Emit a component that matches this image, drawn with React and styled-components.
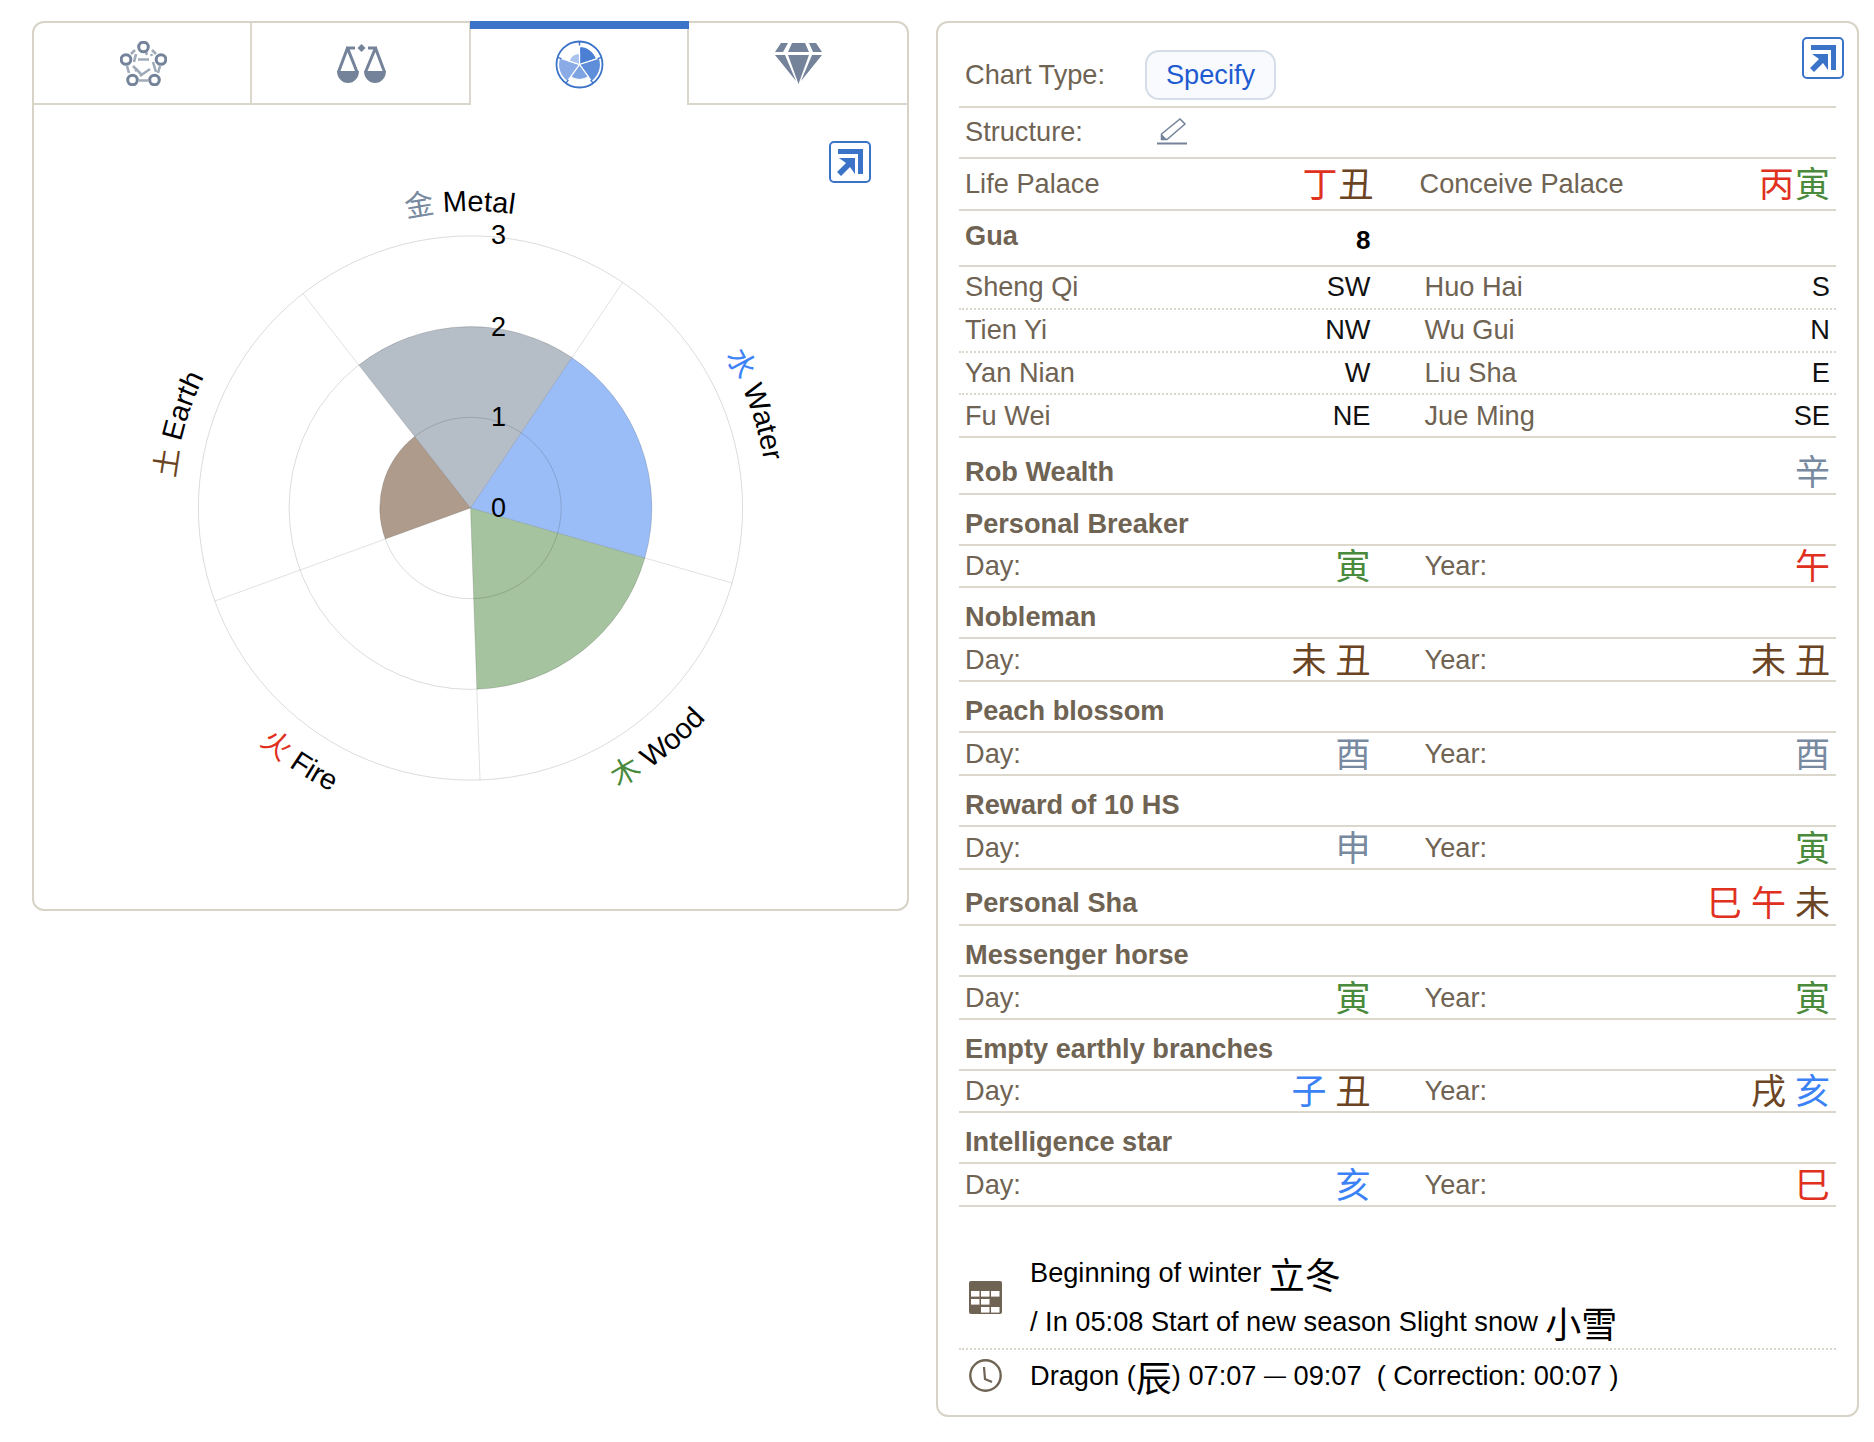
import React from 'react';
import styled, { createGlobalStyle } from 'styled-components';

const SANS = `"Liberation Sans", "Noto Sans CJK SC", Arial, sans-serif`;
const HAN = `"Noto Sans CJK SC", "Liberation Sans", sans-serif`;

const LINE = '#dcd7cc';
const BLUE = '#3b73c9';
const SLATE = '#74839a';
const BROWN = '#6f6353';

const ELEMENT = {
  metal: '#788a9f',
  water: '#3a82f6',
  wood: '#4a8a3c',
  fire: '#e0301e',
  earth: '#6b4423',
};

const CX = 436.5;
const CY = 403;
const UNIT = 90.7;

function polar(cx, cy, r, deg) {
  const a = ((deg - 90) * Math.PI) / 180;
  return [cx + r * Math.cos(a), cy + r * Math.sin(a)];
}

function sector(cx, cy, r, from, to) {
  const [x1, y1] = polar(cx, cy, r, from);
  const [x2, y2] = polar(cx, cy, r, to);
  return `M${cx} ${cy}L${x1} ${y1}A${r} ${r} 0 0 1 ${x2} ${y2}Z`;
}

function labelArc(r, mid, flip) {
  const [x1, y1] = polar(CX, CY, r, flip ? mid + 70 : mid - 70);
  const [x2, y2] = polar(CX, CY, r, flip ? mid - 70 : mid + 70);
  return `M${x1} ${y1}A${r} ${r} 0 0 ${flip ? 0 : 1} ${x2} ${y2}`;
}

const SECTORS = [
  { id: 'metal', han: '金', name: 'Metal', value: 2, from: -38, flip: false, fill: '#788799' },
  { id: 'water', han: '水', name: 'Water', value: 2, from: 34, flip: false, fill: '#4987f1' },
  { id: 'wood', han: '木', name: 'Wood', value: 2, from: 106, flip: true, fill: '#5b924f' },
  { id: 'fire', han: '火', name: 'Fire', value: 0, from: 178, flip: true, fill: '#e0301e' },
  { id: 'earth', han: '土', name: 'Earth', value: 1, from: 250, flip: false, fill: '#6c482c' },
];

const Global = createGlobalStyle`
  html, body { margin: 0; padding: 0; background: #fff; }
  body { font-family: ${SANS}; }
  * { box-sizing: border-box; }
`;

const Page = styled.div`
  display: flex;
  align-items: flex-start;
  gap: 27px;
  width: 1874px;
  height: 1442px;
  padding: 21px 0 0 32px;
`;

const Panel = styled.section`
  position: relative;
  flex: none;
  width: ${(p) => p.$w}px;
  height: ${(p) => p.$h}px;
  border: 2px solid #d8d3c7;
  border-radius: 12px;
`;

const Tabs = styled.div`
  display: grid;
  grid-template-columns: repeat(4, 1fr);
  height: 82px;
`;

const Tab = styled.div`
  position: relative;
  display: flex;
  align-items: center;
  justify-content: center;
  padding: ${(p) => (p.$active ? 1 : 0)}px 0 0 2px;
  border-right: ${(p) => (p.$last ? 'none' : `2px solid ${LINE}`)};
  border-bottom: ${(p) => (p.$active ? 'none' : `2px solid ${LINE}`)};

  ${(p) =>
    p.$active &&
    `&::before {
      content: '';
      position: absolute;
      left: -1px;
      right: -2px;
      top: -2px;
      height: 8px;
      background: ${BLUE};
    }`}
`;

const ExpandBox = styled.button`
  position: absolute;
  top: ${(p) => p.$top}px;
  right: ${(p) => p.$right}px;
  width: 42px;
  height: 42px;
  padding: 0;
  background: #fff;
  border: 2px solid ${BLUE};
  border-radius: 5px;
  display: flex;
`;

const Chart = styled.svg`
  display: block;
  width: 873px;
  height: 805px;
`;

const ChartLabel = styled.text`
  font-family: ${SANS};
  font-size: 29px;
  fill: #000;
`;

const AxisNumber = styled.text`
  font-family: ${SANS};
  font-size: 27px;
  fill: #000;
  text-anchor: middle;
  dominant-baseline: central;
`;

const Sheet = styled.div`
  padding: 0 21px;
`;

const Row = styled.div`
  display: ${(p) => (p.$grid ? 'grid' : 'flex')};
  grid-template-columns: 1fr 1fr;
  column-gap: 54px;
  align-items: ${(p) => p.$align || 'center'};
  justify-content: space-between;
  height: ${(p) => p.$h}px;
  padding: ${(p) => p.$pad || '0 6px'};
  border-bottom: 2px ${(p) => (p.$dotted ? 'dotted' : 'solid')} ${LINE};
`;

const Cell = styled.div`
  display: flex;
  align-items: center;
  justify-content: space-between;
  margin-left: ${(p) => p.$shift || 0}px;
`;

const Label = styled.span`
  font-size: 27.2px;
  line-height: 32px;
  color: ${BROWN};
  font-weight: ${(p) => (p.$bold ? 700 : 400)};
`;

const Fixed = styled(Label)`
  display: inline-block;
  width: 180px;
`;

const Inline = styled.div`
  display: flex;
  align-items: center;
`;

const Value = styled.span`
  font-size: 27.2px;
  line-height: 32px;
  color: #111;
`;

const Gua = styled.span`
  font-size: 26px;
  font-weight: 700;
  line-height: 32px;
  color: #000;
  padding-top: 8px;
`;

const Branches = styled.span`
  display: flex;
  gap: ${(p) => (p.$tight ? 1 : 9)}px;
  margin-top: -4px;
  margin-right: ${(p) => p.$out || 0}px;
`;

const Han = styled.span`
  font-family: ${HAN};
  font-size: ${(p) => p.$size || 35}px;
  line-height: 38px;
  color: ${(p) => ELEMENT[p.$el]};
`;

const Pill = styled.button`
  width: 131px;
  height: 50px;
  padding: 0;
  font-family: ${SANS};
  font-size: 27.2px;
  color: #1f5bd0;
  background: #f8fafd;
  border: 2px solid #d5dde8;
  border-radius: 14px;
`;

const PencilSlot = styled.span`
  display: flex;
  margin-left: 12px;
`;

const Season = styled.div`
  display: flex;
  align-items: center;
  height: 143px;
  padding: 39px 0 0 10px;
  border-bottom: 2px dotted ${LINE};
`;

const Hour = styled.div`
  display: flex;
  align-items: center;
  height: 60px;
  padding: 0 0 9px 10px;
`;

const IconSlot = styled.div`
  flex: none;
  display: flex;
  width: 61px;
`;

const Lines = styled.div`
  display: flex;
  flex-direction: column;
  font-size: 27.2px;
  color: #000;
`;

const TextLine = styled.div`
  height: 49px;
  display: flex;
  align-items: center;
  white-space: pre;
`;

const BigHan = styled.span`
  font-family: ${HAN};
  font-size: 36px;
  line-height: 40px;
  color: #000;
`;

const Dash = styled.span`
  font-size: 22px;
`;

function ExpandIcon({ top, right }) {
  return (
    <ExpandBox $top={top} $right={right} aria-label="expand">
      <svg width="38" height="38" viewBox="0 0 38 38">
        <path d="M7 6H32V31H27V11H7Z" fill={BLUE} />
        <path d="M8 15H24V31L19 24L10 33L6 29L15 20Z" fill={BLUE} />
      </svg>
    </ExpandBox>
  );
}

function NetworkIcon() {
  const nodes = [
    [23.5, 6],
    [6, 18.5],
    [41, 18.5],
    [12.5, 39],
    [34.5, 39],
  ];
  return (
    <svg width="47" height="45" viewBox="0 0 47 45">
      <g stroke="#a0abba" strokeWidth="2.6" fill="none">
        <path d="M15 9L11 13M32 9L36 13M7 25L9 32M40 25L38 32M19 39.5H28" />
        <path d="M16 13L14 21M18 18.5H29M26 11L27 14M13 25L21 33M33 21L36 31M20 35L30 28M15 30L18 28M31 13L32 15" />
      </g>
      {nodes.map(([x, y]) => (
        <circle key={`${x}-${y}`} cx={x} cy={y} r="4.8" fill="#fff" stroke={SLATE} strokeWidth="3" />
      ))}
    </svg>
  );
}

function ScalesIcon() {
  return (
    <svg width="49" height="41" viewBox="0 0 49 41">
      <path d="M24.5 1L28.5 5L24.5 9L20.5 5Z" fill={SLATE} />
      <path d="M9 5H18M31 5H40M10.5 5L1.5 29M10.5 5L20 29M38.5 5L28.5 29M38.5 5L47.5 29" stroke={SLATE} strokeWidth="3" fill="none" />
      <path d="M0 28H22A11 12 0 0 1 0 28ZM27 28H49A11 12 0 0 1 27 28Z" fill={SLATE} />
    </svg>
  );
}

function RadarIcon() {
  const c = 24.5;
  const wedges = [
    [0, 72, 18, '#4a7fd4'],
    [72, 144, 21, '#5e8dd9'],
    [144, 216, 15, '#7ea3e2'],
    [216, 288, 21, '#8aabe5'],
    [288, 360, 11, '#a9c3ee'],
  ];
  const ticks = [0, 72, 144, 216, 288];
  return (
    <svg width="49" height="49" viewBox="0 0 49 49">
      {wedges.map(([a, b, r, fill]) => (
        <path key={a} d={sector(c, c, r, a, b)} fill={fill} stroke="#fff" strokeWidth="1.2" />
      ))}
      <circle cx={c} cy={c} r="23" fill="none" stroke={BLUE} strokeWidth="1.8" />
      {ticks.map((t) => {
        const [x1, y1] = polar(c, c, 19, t);
        const [x2, y2] = polar(c, c, 23, t);
        return <line key={t} x1={x1} y1={y1} x2={x2} y2={y2} stroke={BLUE} strokeWidth="1.4" />;
      })}
    </svg>
  );
}

function DiamondIcon() {
  return (
    <svg width="47" height="41" viewBox="0 0 47 41">
      <path
        d="M6 0H13L8 9H0ZM17 0H30L34 9H13ZM34 0H41L47 9H38ZM0 12H10L21 38ZM13 12H34L23.5 41ZM37 12H47L26 38Z"
        fill={SLATE}
      />
    </svg>
  );
}

function PencilIcon() {
  return (
    <svg width="30" height="27" viewBox="0 0 30 27">
      <path d="M4.5 16L23 1L28 6L10 21.5H4.5Z" fill="none" stroke={SLATE} strokeWidth="1.5" />
      <path d="M4.5 16L10 21.5H4.5Z" fill={SLATE} />
      <path d="M0 25.5H30" stroke={SLATE} strokeWidth="2" />
    </svg>
  );
}

function CalendarIcon() {
  const cells = [
    [2, 10],
    [12, 10],
    [22, 10],
    [2, 18],
    [12, 18],
    [12, 26],
    [22, 26],
  ];
  return (
    <svg width="33" height="33" viewBox="0 0 33 33">
      <rect width="33" height="33" rx="2" fill={BROWN} />
      {cells.map(([x, y]) => (
        <rect key={`${x}-${y}`} x={x} y={y} width="8.5" height="5.6" fill="#fff" />
      ))}
    </svg>
  );
}

function ClockIcon() {
  return (
    <svg width="33" height="33" viewBox="0 0 33 33">
      <circle cx="16.5" cy="16.5" r="15.2" fill="none" stroke={BROWN} strokeWidth="2.4" />
      <path d="M15 8L16 20L23 23" fill="none" stroke={BROWN} strokeWidth="2.2" />
    </svg>
  );
}

function PolarChart() {
  return (
    <Chart viewBox="0 0 873 805">
      <defs>
        {SECTORS.map((s) => (
          <path
            key={s.id}
            id={`arc-${s.id}`}
            d={labelArc(s.flip ? 316 : 297, s.from + 36, s.flip)}
          />
        ))}
      </defs>
      {SECTORS.filter((s) => s.value > 0).map((s) => (
        <path
          key={s.id}
          d={sector(CX, CY, s.value * UNIT, s.from, s.from + 72)}
          fill={s.fill}
          fillOpacity="0.55"
        />
      ))}
      {[1, 2, 3].map((n) => (
        <circle key={n} cx={CX} cy={CY} r={n * UNIT} fill="none" stroke="#000" strokeOpacity="0.14" />
      ))}
      {SECTORS.map((s) => {
        const [x, y] = polar(CX, CY, 3 * UNIT, s.from);
        return <line key={s.id} x1={CX} y1={CY} x2={x} y2={y} stroke="#000" strokeOpacity="0.12" />;
      })}
      {SECTORS.map((s) => (
        <ChartLabel key={s.id} textAnchor="middle">
          <textPath href={`#arc-${s.id}`} startOffset="50%">
            <tspan fontFamily={HAN} fill={ELEMENT[s.id]}>{s.han}</tspan>
            <tspan> {s.name}</tspan>
          </textPath>
        </ChartLabel>
      ))}
      {[0, 1, 2, 3].map((n) => (
        <AxisNumber key={n} x={CX + 28} y={CY - n * UNIT - (n === 3 ? 1 : 0)}>
          {n}
        </AxisNumber>
      ))}
    </Chart>
  );
}

function Glyphs({ items, size, tight, out }) {
  return (
    <Branches $tight={tight} $out={out}>
      {items.map(([ch, el], i) => (
        <Han key={i} $el={el} $size={size}>
          {ch}
        </Han>
      ))}
    </Branches>
  );
}

const DIRECTIONS = [
  ['Sheng Qi', 'SW', 'Huo Hai', 'S', 43, '0 6px 2px'],
  ['Tien Yi', 'NW', 'Wu Gui', 'N', 43, '0 6px 2px'],
  ['Yan Nian', 'W', 'Liu Sha', 'E', 42, '0 6px'],
  ['Fu Wei', 'NE', 'Jue Ming', 'SE', 43, '0 6px'],
];

const STARS_A = [
  { title: 'Personal Breaker', day: [['寅', 'wood']], year: [['午', 'fire']], h: 42 },
  { title: 'Nobleman', day: [['未', 'earth'], ['丑', 'earth']], year: [['未', 'earth'], ['丑', 'earth']], h: 43 },
  { title: 'Peach blossom', day: [['酉', 'metal']], year: [['酉', 'metal']], h: 43 },
  { title: 'Reward of 10 HS', day: [['申', 'metal']], year: [['寅', 'wood']], h: 43 },
];

const STARS_B = [
  { title: 'Messenger horse', day: [['寅', 'wood']], year: [['寅', 'wood']], h: 43 },
  { title: 'Empty earthly branches', day: [['子', 'water'], ['丑', 'earth']], year: [['戌', 'earth'], ['亥', 'water']], h: 42 },
  { title: 'Intelligence star', day: [['亥', 'water']], year: [['巳', 'fire']], h: 43 },
];

function Star({ star }) {
  return (
    <>
      <Row $h={51} $align="flex-end" $pad="0 6px 4px">
        <Label $bold>{star.title}</Label>
      </Row>
      <Row $grid $h={star.h}>
        <Cell>
          <Label>Day:</Label>
          <Glyphs items={star.day} />
        </Cell>
        <Cell>
          <Label>Year:</Label>
          <Glyphs items={star.year} />
        </Cell>
      </Row>
    </>
  );
}

export default function App() {
  return (
    <>
      <Global />
      <Page>
        <Panel $w={877} $h={890}>
          <Tabs>
            <Tab><NetworkIcon /></Tab>
            <Tab><ScalesIcon /></Tab>
            <Tab $active><RadarIcon /></Tab>
            <Tab $last><DiamondIcon /></Tab>
          </Tabs>
          <PolarChart />
          <ExpandIcon top={118} right={36} />
        </Panel>

        <Panel $w={923} $h={1396}>
          <Sheet>
            <Row $h={85} $pad="21px 6px 0">
              <Inline>
                <Fixed>Chart Type:</Fixed>
                <Pill>Specify</Pill>
              </Inline>
            </Row>
            <Row $h={51} $pad="0 6px 2px">
              <Inline>
                <Fixed>Structure:</Fixed>
                <PencilSlot><PencilIcon /></PencilSlot>
              </Inline>
            </Row>
            <Row $grid $h={52}>
              <Cell>
                <Label>Life Palace</Label>
                <Glyphs tight out={-3} items={[['丁', 'fire'], ['丑', 'earth']]} />
              </Cell>
              <Cell $shift={-5}>
                <Label>Conceive Palace</Label>
                <Glyphs tight items={[['丙', 'fire'], ['寅', 'wood']]} />
              </Cell>
            </Row>
            <Row $grid $h={56} $pad="0 6px 4px">
              <Cell>
                <Label $bold>Gua</Label>
                <Gua>8</Gua>
              </Cell>
            </Row>
            {DIRECTIONS.map(([a, av, b, bv, h, pad], i) => (
              <Row key={a} $grid $h={h} $pad={pad} $dotted={i < 3}>
                <Cell>
                  <Label>{a}</Label>
                  <Value>{av}</Value>
                </Cell>
                <Cell>
                  <Label>{b}</Label>
                  <Value>{bv}</Value>
                </Cell>
              </Row>
            ))}
            <Row $h={57} $pad="12px 6px 0">
              <Label $bold>Rob Wealth</Label>
              <Glyphs items={[['辛', 'metal']]} />
            </Row>
            {STARS_A.map((s) => (
              <Star key={s.title} star={s} />
            ))}
            <Row $h={56} $pad="12px 6px 0">
              <Label $bold>Personal Sha</Label>
              <Glyphs items={[['巳', 'fire'], ['午', 'fire'], ['未', 'earth']]} />
            </Row>
            {STARS_B.map((s) => (
              <Star key={s.title} star={s} />
            ))}
            <Season>
              <IconSlot><CalendarIcon /></IconSlot>
              <Lines>
                <TextLine>Beginning of winter <BigHan>立冬</BigHan></TextLine>
                <TextLine>/ In 05:08 Start of new season Slight snow <BigHan>小雪</BigHan></TextLine>
              </Lines>
            </Season>
            <Hour>
              <IconSlot><ClockIcon /></IconSlot>
              <Lines>
                <TextLine>Dragon (<BigHan>辰</BigHan>) 07:07 <Dash>—</Dash> 09:07  ( Correction: 00:07 )</TextLine>
              </Lines>
            </Hour>
          </Sheet>
          <ExpandIcon top={14} right={13} />
        </Panel>
      </Page>
    </>
  );
}
